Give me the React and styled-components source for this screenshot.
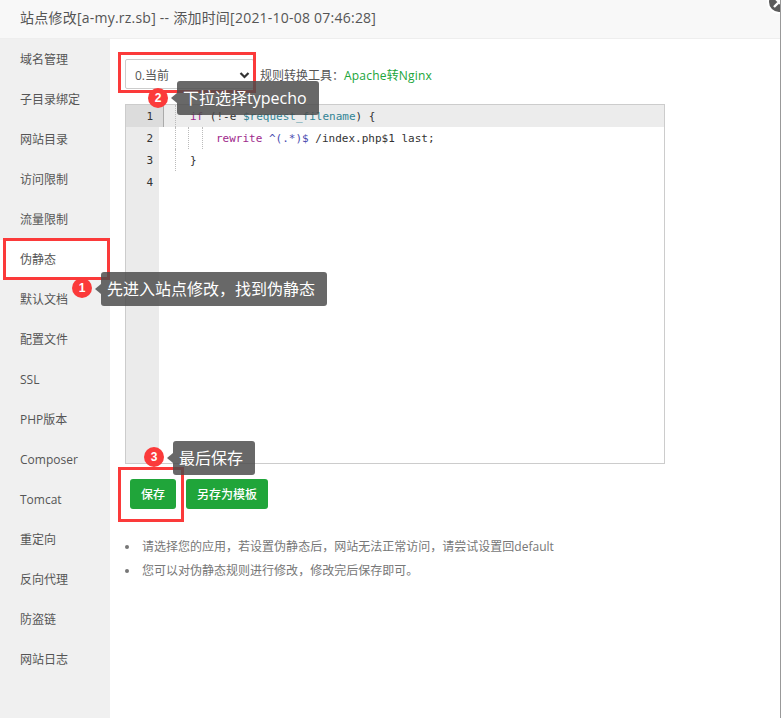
import React from 'react';
import styled, { createGlobalStyle } from 'styled-components';

const Global = createGlobalStyle`
  html, body { margin: 0; padding: 0; background: #fff; }
  body { font-family: "Open Sans", "Noto Sans CJK SC", sans-serif; overflow: hidden; }
  * { box-sizing: border-box; }
`;
const Page = styled.div`
  position: relative; width: 781px; height: 718px; overflow: hidden; background: #fff;
  display: flex; flex-direction: column; border-right: 1px solid #999;
`;
const Header = styled.div`
  height: 39px; flex: none; background: #f8f8f8; border-bottom: 1px solid #eee; color: #555;
  font-size: 14px; line-height: 36px; padding-left: 20px; white-space: nowrap; letter-spacing: .23px;
`;
const Body = styled.div`flex: 1; display: flex; min-height: 0;`;
const Side = styled.div`width: 110px; flex: none; background: #f0f0f0; padding-top: 1px;`;
const Item = styled.div`
  height: 40px; line-height: 40px; padding-left: 20px; font-size: 12px; color: #555;
  background: ${p => (p.$active ? '#fff' : 'transparent')};
`;
const Main = styled.div`flex: 1; padding: 20px 0 0 15px;`;
const Tools = styled.div`display: flex; align-items: center; height: 30px; font-size: 12px; color: #555;`;
const Select = styled.div`
  width: 129px; height: 30px; border: 1px solid #ccc; border-radius: 2px; background: #fff;
  display: flex; align-items: center; justify-content: space-between; padding: 1px 0 0 9px; margin-right: 6px; color: #555;
`;
const Label = styled.span`padding-top: 1px;`;
const Green = styled.span`color: #20a53a; letter-spacing: .2px;`;
const Editor = styled.div`
  width: 540px; height: 360px; margin-top: 15px; border: 1px solid #ccc; display: flex;
  font-family: "DejaVu Sans Mono", monospace; font-size: 11px; line-height: 23px;
`;
const Gutter = styled.div`width: 33px; flex: none; background: #ebebeb; color: #333; text-align: right;`;
const Num = styled.div`padding-right: 6px; height: 22px; background: ${p => (p.$on ? '#dcdcdc' : 'transparent')};`;
const Code = styled.div`flex: 1; color: #333;`;
const Line = styled.div`
  height: 22px; white-space: pre; display: flex; padding-left: ${p => p.$pad}px;
  background: ${p => (p.$on ? '#ececec' : 'transparent')};
`;
const Cursor = styled.span`width: 5px; flex: none; background: #dcdcdc; border-right: 1px solid #aaa; margin-right: 11px;`;
const Indent = styled.span`width: ${p => p.$w}px; flex: none; border-left: 1px dotted #bbb;`;
const Kw = styled.span`color: #a02a8c;`;
const Var = styled.span`color: #318495;`;
const Rx = styled.span`color: #4b4bb0;`;
const Buttons = styled.div`display: flex; gap: 10px; padding: 15px 0 0 5px;`;
const Btn = styled.div`
  height: 30px; padding: 0 11px; line-height: 31px; background: #20a53a; color: #fff;
  border-radius: 3px; font-size: 12px; font-weight: 500;
`;
const Notes = styled.ul`
  margin: 26px 0 0; padding: 0; list-style: none; font-size: 12px; color: #777; line-height: 24px;
`;
const Note = styled.li`
  display: flex; align-items: center; gap: 13px; letter-spacing: .01px;
  &::before { content: ""; width: 4px; height: 4px; border-radius: 50%; background: #777; flex: none; }
`;
const Frame = styled.div`
  position: absolute; border: 3px solid #fb3a3a;
  left: ${p => p.$x}px; top: ${p => p.$y}px; width: ${p => p.$w}px; height: ${p => p.$h}px;
`;
const Tip = styled.div`
  position: absolute; left: ${p => p.$x}px; top: ${p => p.$y}px; height: 34px; padding: 0 12px 0 6px;
  background: rgba(75,75,75,.84); color: #fff; border-radius: 3px; font-size: 16px; line-height: 34px; white-space: nowrap;
  &::before {
    content: ""; position: absolute; left: -6px; top: 12px; border: 5px solid transparent; border-left: 0;
    border-right: 6px solid rgba(75,75,75,.84);
  }
`;
const Badge = styled.div`
  position: absolute; left: ${p => p.$x}px; top: ${p => p.$y}px; width: 20px; height: 20px; border-radius: 50%;
  background: #fb3a3a; color: #fff; font-size: 12px; font-weight: 700; text-align: center; line-height: 20px;
  font-family: "Liberation Sans", sans-serif;
`;
const Close = styled.div`
  position: absolute; right: -11px; top: -10px; width: 24px; height: 24px; border-radius: 50%;
  background: #5c5c5c; border: 2px solid #fff; display: flex; align-items: center; justify-content: center;
`;

const nav = ['域名管理','子目录绑定','网站目录','访问限制','流量限制','伪静态','默认文档','配置文件','SSL','PHP版本','Composer','Tomcat','重定向','反向代理','防盗链','网站日志'];

export default function App() {
  return (
    <Page>
      <Global />
      <Header>站点修改[a-my.rz.sb] -- 添加时间[2021-10-08 07:46:28]</Header>
      <Body>
        <Side>{nav.map(n => <Item key={n} $active={n === '伪静态'}>{n}</Item>)}</Side>
        <Main>
          <Tools>
            <Select>
              <span>0.当前</span>
              <svg width="16" height="16" viewBox="0 0 16 16" fill="none" stroke="#333" strokeWidth="2.2"><path d="M3.5 6l4 4 4-4" /></svg>
            </Select>
            <Label>规则转换工具：<Green>Apache转Nginx</Green></Label>
          </Tools>
          <Editor>
            <Gutter>{[1,2,3,4].map(n => <Num key={n} $on={n === 1}>{n}</Num>)}</Gutter>
            <Code>
              <Line $on $pad={0}><Cursor /><Indent $w={15} /><span><Kw>if</Kw> (!-e <Var>$request_filename</Var>) {'{'}</span></Line>
              <Line $pad={16}><Indent $w={13} /><Indent $w={14} /><Indent $w={14} /><span><Kw>rewrite</Kw> <Rx>^(.*)$</Rx> /index.php$1 last;</span></Line>
              <Line $pad={16}><Indent $w={15} /><span>{'}'}</span></Line>
              <Line $pad={31} />
            </Code>
          </Editor>
          <Buttons>
            <Btn>保存</Btn>
            <Btn>另存为模板</Btn>
          </Buttons>
          <Notes>
            <Note>请选择您的应用，若设置伪静态后，网站无法正常访问，请尝试设置回default</Note>
            <Note>您可以对伪静态规则进行修改，修改完后保存即可。</Note>
          </Notes>
        </Main>
      </Body>
      <Frame $x={118} $y={52} $w={138} $h={41} />
      <Frame $x={3} $y={238} $w={107} $h={42} />
      <Frame $x={118} $y={467} $w={66} $h={55} />
      <Tip $x={177} $y={81}>下拉选择typecho</Tip>
      <Tip $x={101} $y={272}>先进入站点修改，找到伪静态</Tip>
      <Tip $x={173} $y={441}>最后保存</Tip>
      <Badge $x={148} $y={88}>2</Badge>
      <Badge $x={72} $y={278}>1</Badge>
      <Badge $x={144} $y={447}>3</Badge>
      <Close>
        <svg width="12" height="12" viewBox="0 0 12 12" stroke="#fff" strokeWidth="2.4"><path d="M1 1l10 10M11 1L1 11" /></svg>
      </Close>
    </Page>
  );
}
